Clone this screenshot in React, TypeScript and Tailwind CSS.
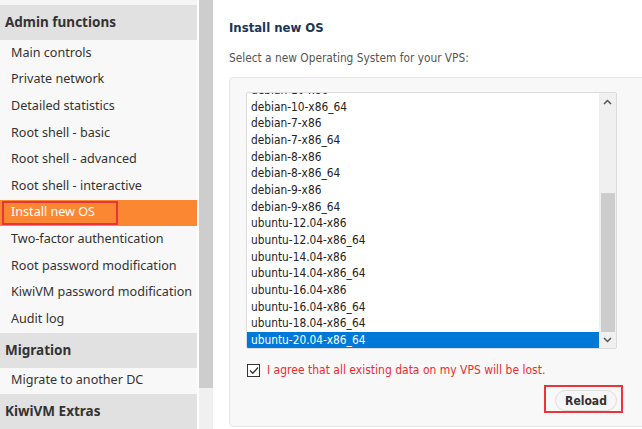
import React from "react";

const items = [
  "Main controls",
  "Private network",
  "Detailed statistics",
  "Root shell - basic",
  "Root shell - advanced",
  "Root shell - interactive",
  "Install new OS",
  "Two-factor authentication",
  "Root password modification",
  "KiwiVM password modification",
  "Audit log",
];

const osList = [
  "debian-10-x86",
  "debian-10-x86_64",
  "debian-7-x86",
  "debian-7-x86_64",
  "debian-8-x86",
  "debian-8-x86_64",
  "debian-9-x86",
  "debian-9-x86_64",
  "ubuntu-12.04-x86",
  "ubuntu-12.04-x86_64",
  "ubuntu-14.04-x86",
  "ubuntu-14.04-x86_64",
  "ubuntu-16.04-x86",
  "ubuntu-16.04-x86_64",
  "ubuntu-18.04-x86_64",
  "ubuntu-20.04-x86_64",
];

const sideFont = { fontFamily: '"Noto Sans", "Open Sans", sans-serif' };
const tahoma = { fontFamily: '"DejaVu Sans Condensed", "DejaVu Sans", Verdana, sans-serif' };

function Header({ children }: { children: React.ReactNode }) {
  return (
    <div className="h-[35px] bg-[#e1e1e1] flex items-center pl-[5px] text-[13.5px] font-bold text-[#333] whitespace-nowrap">
      {children}
    </div>
  );
}

export default function App() {
  return (
    <div className="w-[642px] h-[429px] overflow-hidden flex bg-white">
      <aside className="w-[197px] shrink-0 flex flex-col bg-[#f8f8f8]" style={sideFont}>
        <div className="h-[5px] bg-[#f5f5f5]" />
        <Header>Admin functions</Header>
        {items.map((it) =>
          it === "Install new OS" ? (
            <div key={it} className="relative h-[26.6px] bg-[#fb8733] flex items-center pl-[11px] text-[12.6px] text-white whitespace-nowrap">
              {it}
              <div className="absolute left-[2px] top-[1px] w-[116px] h-[24px] border-2 border-[#e8343a]" />
            </div>
          ) : (
            <div key={it} className="h-[26.6px] flex items-center pl-[11px] text-[12.6px] text-[#333] whitespace-nowrap">
              {it}
            </div>
          )
        )}
        <Header>Migration</Header>
        <div className="h-[26px] flex items-center pl-[11px] text-[12.6px] text-[#333] whitespace-nowrap">Migrate to another DC</div>
        <Header>KiwiVM Extras</Header>
      </aside>
      <div className="w-[2px] shrink-0" />
      <div className="w-[14px] shrink-0 flex flex-col">
        <div className="h-[388px] bg-[#cdcdcd]" />
        <div className="flex-1 bg-[#f0f0f0]" />
      </div>
      <main className="flex-1 pl-[16px] pt-[18px] min-w-0" style={tahoma}>
        <h1 className="text-[13px] font-bold text-[#1a3656] leading-[20px]">Install new OS</h1>
        <p className="mt-[12px] text-[11.8px] text-[#555] leading-[16px] whitespace-nowrap">Select a new Operating System for your VPS:</p>
        <div className="mt-[11px] w-[420px] h-[350px] bg-[#f8f8f8] border border-[#e6e6e6] rounded-[4px] pl-[16px] pt-[14px]">
          <div className="w-[371px] flex flex-col">
            <div className="h-[257px] bg-white border border-[#dcdcdc] rounded-[2px] flex overflow-hidden">
              <div className="flex-1 overflow-hidden">
                <div className="-mt-[11px] flex flex-col">
                  {osList.map((os, i) => (
                    <div
                      key={os}
                      className={
                        i === osList.length - 1
                          ? "h-[16.67px] leading-[16.67px] pl-[4px] text-[11.8px] bg-[#0078d7] text-white"
                          : "h-[16.67px] leading-[16.67px] pl-[4px] text-[11.8px] text-[#222]"
                      }
                    >
                      {os}
                    </div>
                  ))}
                </div>
              </div>
              <div className="w-[17px] bg-[#f0f0f0] flex flex-col items-center">
                <div className="h-[17px] flex items-center justify-center">
                  <svg width="9" height="6" viewBox="0 0 9 6">
                    <path d="M1 5 L4.5 1.5 L8 5" fill="none" stroke="#555" strokeWidth="1.5" />
                  </svg>
                </div>
                <div className="h-[83px]" />
                <div className="w-[14px] h-[139px] bg-[#cdcdcd]" />
                <div className="flex-1 flex items-center justify-center">
                  <svg width="9" height="6" viewBox="0 0 9 6">
                    <path d="M1 1 L4.5 4.5 L8 1" fill="none" stroke="#555" strokeWidth="1.5" />
                  </svg>
                </div>
              </div>
            </div>
            <div className="mt-[12px] flex items-center gap-[7px]">
              <div className="w-[13px] h-[13px] border border-[#333] bg-white flex items-center justify-center ml-[1px]">
                <svg width="10" height="9" viewBox="0 0 10 9">
                  <path d="M1 4.5 L3.8 7.3 L9 1.5" fill="none" stroke="#333" strokeWidth="1.3" />
                </svg>
              </div>
              <span className="text-[12px] text-[#ef2b2b] whitespace-nowrap">I agree that all existing data on my VPS will be lost.</span>
            </div>
            <div className="mt-[11px] flex justify-end">
              <div className="relative">
                <button className="w-[62px] h-[21px] rounded-full bg-[#f6f6f6] border border-[#dedede] text-[12px] font-bold text-[#333] flex items-center justify-center">
                  Reload
                </button>
                <div className="absolute -left-[11px] -top-[5px] w-[79px] h-[28px] border-2 border-[#e8343a]" />
              </div>
            </div>
          </div>
        </div>
      </main>
    </div>
  );
}
